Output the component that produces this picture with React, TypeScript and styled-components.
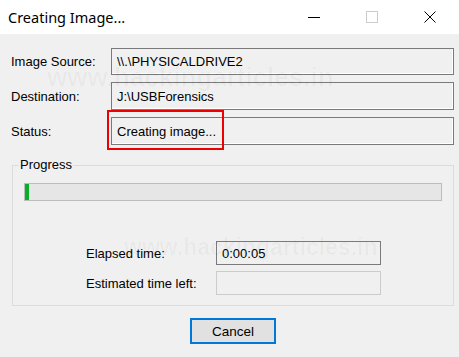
import React from 'react';
import styled, { createGlobalStyle } from 'styled-components';

const GlobalStyle = createGlobalStyle`
  html, body {
    margin: 0;
    padding: 0;
    background: #f0f0f0;
  }

  body {
    font-family: "Liberation Sans", Arial, sans-serif;
    font-size: 13px;
    color: #000;
  }
`;

const Window = styled.div`
  position: relative;
  width: 459px;
  height: 357px;
  background: #f0f0f0;
  overflow: hidden;
`;

const TitleBar = styled.div`
  height: 34px;
  display: flex;
  align-items: center;
  background: #fff;
`;

const Title = styled.div`
  flex: 1;
  padding-left: 8px;
  font-family: "Noto Sans", "Open Sans", sans-serif;
  font-size: 14.5px;
  color: #000;
`;

const CaptionButton = styled.div`
  width: 58px;
  height: 34px;
  display: flex;
  align-items: center;
  justify-content: center;
`;

const Body = styled.div`
  padding: 14px 5px 0 11px;
`;

const Form = styled.div`
  display: grid;
  grid-template-columns: 100px 1fr;
  row-gap: 7px;
  align-items: center;
`;

const Label = styled.div`
  white-space: nowrap;
`;

const Field = styled.div<{ $height: number }>`
  position: relative;
  height: ${p => p.$height}px;
  box-sizing: border-box;
  display: flex;
  align-items: center;
  padding-left: 5px;
  border: 1px solid #7a7a7a;
  box-shadow: inset -1px -1px 0 #fff;
  white-space: nowrap;
`;

const Highlight = styled.div`
  position: absolute;
  left: -5px;
  top: -8px;
  width: 117px;
  height: 40px;
  box-sizing: border-box;
  border: 2px solid #ee0000;
  pointer-events: none;
`;

const Group = styled.fieldset`
  margin: 12px 0 0 1px;
  padding: 1px 11px 10px 11px;
  border: 1px solid #dcdcdc;
  min-width: 0;
`;

const Legend = styled.legend`
  margin-left: -5px;
  padding: 0 1px;
  line-height: 16px;
`;

const ProgressTrack = styled.div`
  height: 18px;
  margin-top: 9px;
  box-sizing: border-box;
  border: 1px solid #bcbcbc;
  background: #e6e6e6;
`;

const ProgressFill = styled.div`
  height: 100%;
  background: #06b025;
`;

const TimeGrid = styled.div`
  display: grid;
  grid-template-columns: 130px 165px;
  row-gap: 6px;
  align-items: center;
  margin: 40px 0 0 62px;
`;

const TimeBox = styled.div<{ $disabled?: boolean }>`
  height: 24px;
  box-sizing: border-box;
  display: flex;
  align-items: center;
  padding-left: 5px;
  border: 1px solid ${p => (p.$disabled ? '#cccccc' : '#7a7a7a')};
`;

const Footer = styled.div`
  display: flex;
  justify-content: center;
  padding-left: 1px;
  margin-top: 12px;
`;

const Button = styled.button`
  width: 86px;
  height: 26px;
  box-sizing: border-box;
  border: 2px solid #0078d7;
  background: #e1e1e1;
  font-family: "Liberation Sans", Arial, sans-serif;
  font-size: 13.5px;
  color: #000;
  padding: 0;
`;

const Watermark = styled.div<{ $top: number; $left: number; $size: number }>`
  position: absolute;
  top: ${p => p.$top}px;
  left: ${p => p.$left}px;
  font-family: "Liberation Sans", Arial, sans-serif;
  font-weight: bold;
  font-size: ${p => p.$size}px;
  color: rgba(0, 0, 0, 0.03);
  pointer-events: none;
  white-space: nowrap;
`;

const elapsed = 0.01;

function App () {
  return (
    <Window>
      <GlobalStyle />
      <TitleBar>
        <Title>Creating Image...</Title>
        <CaptionButton>
          <svg width='12' height='12' viewBox='0 0 12 12'><path d='M0 6.5h12' stroke='#000' strokeWidth='1' /></svg>
        </CaptionButton>
        <CaptionButton>
          <svg width='12' height='12' viewBox='0 0 12 12'><rect x='0.5' y='0.5' width='11' height='11' fill='none' stroke='#cccccc' strokeWidth='1' /></svg>
        </CaptionButton>
        <CaptionButton>
          <svg width='12' height='12' viewBox='0 0 12 12'><path d='M0.5 0.5l11 11M11.5 0.5l-11 11' stroke='#000' strokeWidth='1' /></svg>
        </CaptionButton>
      </TitleBar>

      <Body>
        <Form>
          <Label>Image Source:</Label>
          <Field $height={27}>\\.\PHYSICALDRIVE2</Field>
          <Label>Destination:</Label>
          <Field $height={28}>J:\USBForensics</Field>
          <Label>Status:</Label>
          <Field $height={28}>
            Creating image...
            <Highlight />
          </Field>
        </Form>

        <Group>
          <Legend>Progress</Legend>
          <ProgressTrack>
            <ProgressFill style={{ width: `${elapsed * 100}%` }} />
          </ProgressTrack>
          <TimeGrid>
            <Label>Elapsed time:</Label>
            <TimeBox>0:00:05</TimeBox>
            <Label>Estimated time left:</Label>
            <TimeBox $disabled />
          </TimeGrid>
        </Group>

        <Footer>
          <Button>Cancel</Button>
        </Footer>
      </Body>

      <Watermark $top={62} $left={47} $size={26}>www.hackingarticles.in</Watermark>
      <Watermark $top={234} $left={124} $size={23}>www.hackingarticles.in</Watermark>
    </Window>
  );
}

export default App;
